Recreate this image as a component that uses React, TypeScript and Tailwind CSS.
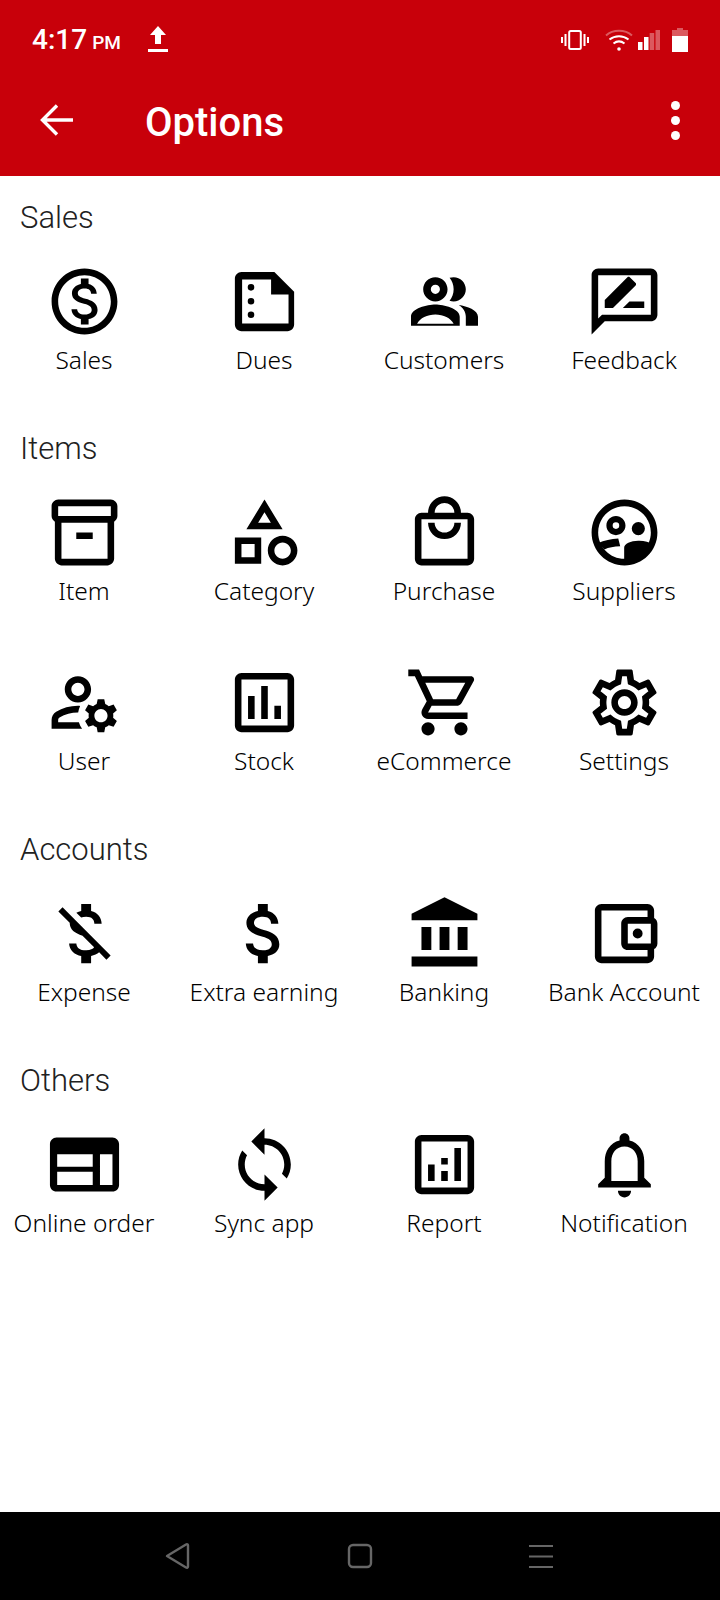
const ICONS: Record<string, string> = {
  sales:
    "M12 2C6.48 2 2 6.48 2 12s4.48 10 10 10 10-4.48 10-10S17.52 2 12 2zm0 18c-4.41 0-8-3.59-8-8s3.59-8 8-8 8 3.59 8 8-3.59 8-8 8zm.31-8.86c-1.77-.45-2.34-.94-2.34-1.67 0-.84.79-1.43 2.1-1.43 1.38 0 1.9.66 1.94 1.64h1.71c-.05-1.34-.87-2.57-2.49-2.97V5H10.9v1.69c-1.51.32-2.72 1.3-2.72 2.81 0 1.79 1.49 2.69 3.66 3.21 1.95.46 2.34 1.15 2.34 1.87 0 .53-.39 1.39-2.1 1.39-1.6 0-2.23-.72-2.32-1.64H8.04c.1 1.7 1.36 2.66 2.86 2.97V19h2.34v-1.67c1.52-.29 2.72-1.16 2.73-2.77-.01-2.2-1.9-2.96-3.66-3.42z",
  dues: "M5 3h10l6 6v10c0 1.1-.9 2-2 2H5c-1.1 0-2-.9-2-2V5c0-1.1.9-2 2-2zm.2 2.3v13.4h14.1V9.9H14V5.3H5.2zM7.9 6.7a1 1 0 1 1 0 2 1 1 0 0 1 0-2zm0 4.2a1 1 0 1 1 0 2 1 1 0 0 1 0-2zm0 4.1a1 1 0 1 1 0 2 1 1 0 0 1 0-2z",
  customers:
    "M16.67 13.13C18.04 14.06 19 15.32 19 17v3h4v-3c0-2.18-3.57-3.47-6.33-3.87zM15 12c2.21 0 4-1.79 4-4s-1.79-4-4-4c-.47 0-.91.1-1.33.24C14.5 5.27 15 6.58 15 8s-.5 2.73-1.33 3.76c.42.14.86.24 1.33.24zM9 12c2.21 0 4-1.79 4-4s-1.79-4-4-4-4 1.79-4 4 1.79 4 4 4zm0-5.5a1.5 1.5 0 1 1 0 3 1.5 1.5 0 0 1 0-3zM9 13c-2.67 0-8 1.34-8 4v3h16v-3c0-2.66-5.33-4-8-4zM3 19.3c.9-1.8 3.4-3 6-3s5.1 1.2 6 3H3z",
  feedback:
    "M20 2H4c-1.1 0-1.99.9-1.99 2L2 22l4-4h14c1.1 0 2-.9 2-2V4c0-1.1-.9-2-2-2zm0 14H5.17L4 17.17V4h16v12zM6 14h2.5l6.88-6.88c.2-.2.2-.51 0-.71L13.6 4.63c-.2-.2-.51-.2-.71 0L6 11.52V14zm5.5 0H18v-2h-4.5l-2 2z",
  item: "M20 2H4c-1 0-2 .9-2 2v3.01c0 .72.43 1.34 1 1.69V20c0 1.1 1.1 2 2 2h14c.9 0 2-.9 2-2V8.7c.57-.35 1-.97 1-1.69V4c0-1.1-1-2-2-2zm-1 18H5V9h14v11zm1-13H4V4h16v3zM9.5 12h5v2h-5z",
  category:
    "M12 2l-5.5 9h11L12 2zm0 3.84L13.93 9h-3.87L12 5.84zM17.5 13c-2.49 0-4.5 2.01-4.5 4.5s2.01 4.5 4.5 4.5 4.5-2.01 4.5-4.5-2.01-4.5-4.5-4.5zm0 7c-1.38 0-2.5-1.12-2.5-2.5s1.12-2.5 2.5-2.5 2.5 1.12 2.5 2.5-1.12 2.5-2.5 2.5zM3 21.5h8v-8H3v8zm2-6h4v4H5v-4z",
  purchase:
    "M19 6h-2c0-2.76-2.24-5-5-5S7 3.24 7 6H5c-1.1 0-2 .9-2 2v12c0 1.1.9 2 2 2h14c1.1 0 2-.9 2-2V8c0-1.1-.9-2-2-2zm-7-3c1.66 0 3 1.34 3 3H9c0-1.66 1.34-3 3-3zm7 17H5V8h14v12zm-7-8c-1.66 0-3-1.34-3-3H7c0 2.76 2.24 5 5 5s5-2.24 5-5h-2c0 1.66-1.34 3-3 3z",
  // ring, eyes, then the two shoulders as separate paths so they can overlap the ring
  suppliers:
    "M12 2C6.48 2 2 6.48 2 12s4.48 10 10 10 10-4.48 10-10S17.52 2 12 2zm0 2c4.41 0 8 3.59 8 8s-3.59 8-8 8-8-3.59-8-8 3.59-8 8-8zM9.4 7c-1.6 0-2.9 1.3-2.9 2.9s1.3 2.9 2.9 2.9 2.9-1.3 2.9-2.9S11 7 9.4 7zm0 1.9a1 1 0 1 1 0 2 1 1 0 0 1 0-2zM16.2 8.8a2 2 0 1 0 0 4 2 2 0 0 0 0-4z|M4 15.2c1.8-.8 3.9-1.3 6.1-1.4l.6 2.4c-1.9.1-3.5.3-4.8 1z|M11.9 21v-4.4c0-1.2 2.2-2.2 4.6-2.1 1.6 0 3.1.4 4.2 1.2l-2.5 3.2-4 2.1z",
  user: "M4 18v-.65c0-.34.16-.66.41-.81C6.1 15.53 8.03 15 10 15c.03 0 .05 0 .08.01.1-.7.3-1.37.59-1.98-.22-.02-.44-.03-.67-.03-2.42 0-4.68.67-6.61 1.82-.88.52-1.39 1.5-1.39 2.53V20h9.26c-.42-.6-.75-1.28-.97-2H4zM10 12c2.21 0 4-1.79 4-4s-1.79-4-4-4-4 1.79-4 4 1.79 4 4 4zm0-6c1.1 0 2 .9 2 2s-.9 2-2 2-2-.9-2-2 .9-2 2-2zM20.75 16c0-.22-.03-.42-.06-.63l1.14-1.01-1-1.73-1.45.49c-.32-.27-.68-.48-1.08-.63L18 11h-2l-.3 1.49c-.4.15-.76.36-1.08.63l-1.45-.49-1 1.73 1.14 1.01c-.03.21-.06.41-.06.63s.03.42.06.63l-1.14 1.01 1 1.73 1.45-.49c.32.27.68.48 1.08.63L16 21h2l.3-1.49c.4-.15.76-.36 1.08-.63l1.45.49 1-1.73-1.14-1.01c.03-.21.06-.41.06-.63zM17 18c-1.1 0-2-.9-2-2s.9-2 2-2 2 .9 2 2-.9 2-2 2z",
  stock:
    "M19 3H5c-1.1 0-2 .9-2 2v14c0 1.1.9 2 2 2h14c1.1 0 2-.9 2-2V5c0-1.1-.9-2-2-2zm0 16H5V5h14v14zM7 10h2v7H7zM11 7h2v10h-2zM15 13h2v4h-2z",
  ecommerce:
    "M15.55 13c.75 0 1.41-.41 1.75-1.03l3.58-6.49c.37-.66-.11-1.48-.87-1.48H5.21l-.94-2H1v2h2l3.6 7.59-1.35 2.44C4.52 15.37 5.48 17 7 17h12v-2H7l1.1-2h7.45zM6.16 6h12.15l-2.76 5H8.53L6.16 6zM7 18c-1.1 0-1.99.9-1.99 2S5.9 22 7 22s2-.9 2-2-.9-2-2-2zm10 0c-1.1 0-1.99.9-1.99 2s.89 2 1.99 2 2-.9 2-2-.9-2-2-2z",
  settings:
    "M19.43 12.98c.04-.32.07-.64.07-.98 0-.34-.03-.66-.07-.98l2.11-1.65c.19-.15.24-.42.12-.64l-2-3.46c-.09-.16-.26-.25-.44-.25-.06 0-.12.01-.17.03l-2.49 1c-.52-.4-1.08-.73-1.69-.98l-.38-2.65C14.46 2.18 14.25 2 14 2h-4c-.25 0-.46.18-.49.42l-.38 2.65c-.61.25-1.17.59-1.69.98l-2.49-1c-.06-.02-.12-.03-.18-.03-.17 0-.34.09-.43.25l-2 3.46c-.13.22-.07.49.12.64l2.11 1.65c-.04.32-.07.65-.07.98 0 .33.03.66.07.98l-2.11 1.65c-.19.15-.24.42-.12.64l2 3.46c.09.16.26.25.44.25.06 0 .12-.01.17-.03l2.49-1c.52.4 1.08.73 1.69.98l.38 2.65c.03.24.24.42.49.42h4c.25 0 .46-.18.49-.42l.38-2.65c.61-.25 1.17-.59 1.69-.98l2.49 1c.06.02.12.03.18.03.17 0 .34-.09.43-.25l2-3.46c.12-.22.07-.49-.12-.64l-2.11-1.65zm-1.98-1.71c.04.31.05.52.05.73 0 .21-.02.43-.05.73l-.14 1.13.89.7 1.08.84-.7 1.21-1.27-.51-1.04-.42-.9.68c-.43.32-.84.56-1.25.73l-1.06.43-.16 1.13-.2 1.35h-1.4l-.19-1.35-.16-1.13-1.06-.43c-.43-.18-.83-.41-1.23-.71l-.91-.7-1.06.43-1.27.51-.7-1.21 1.08-.84.89-.7-.14-1.13c-.03-.31-.05-.54-.05-.74s.02-.43.05-.73l.14-1.13-.89-.7-1.08-.84.7-1.21 1.27.51 1.04.42.9-.68c.43-.32.84-.56 1.25-.73l1.06-.43.16-1.13.2-1.35h1.39l.19 1.35.16 1.13 1.06.43c.43.18.83.41 1.23.71l.91.7 1.06-.43 1.27-.51.7 1.21-1.07.85-.89.7.14 1.13zM12 8c-2.21 0-4 1.79-4 4s1.79 4 4 4 4-1.79 4-4-1.79-4-4-4zm0 6c-1.1 0-2-.9-2-2s.9-2 2-2 2 .9 2 2-.9 2-2 2z",
  expense:
    "M12.5 6.9c1.78 0 2.44.85 2.5 2.1h2.21c-.07-1.72-1.12-3.3-3.21-3.81V3h-3v2.16c-.53.12-1.03.3-1.48.54l1.47 1.47c.41-.17.91-.27 1.51-.27zM5.33 4.06L4.06 5.33 7.5 8.77c0 2.08 1.56 3.21 3.91 3.91l3.51 3.51c-.34.48-1.05.91-2.42.91-2.06 0-2.87-.92-2.98-2.1h-2.2c.12 2.19 1.76 3.42 3.68 3.83V21h3v-2.15c.96-.18 1.82-.55 2.45-1.12l2.22 2.22 1.27-1.27L5.33 4.06z",
  earning:
    "M11.8 10.9c-2.27-.59-3-1.2-3-2.15 0-1.09 1.01-1.85 2.7-1.85 1.78 0 2.44.85 2.5 2.1h2.21c-.07-1.72-1.12-3.3-3.21-3.81V3h-3v2.16c-1.94.42-3.5 1.68-3.5 3.61 0 2.31 1.91 3.46 4.7 4.13 2.5.6 3 1.48 3 2.41 0 .69-.49 1.79-2.7 1.79-2.06 0-2.87-.92-2.98-2.1h-2.2c.12 2.19 1.76 3.42 3.68 3.83V21h3v-2.15c1.95-.37 3.5-1.5 3.5-3.55 0-2.84-2.43-3.81-4.7-4.4z",
  banking:
    "M5 10v7h3v-7H5zm5.5 0v7h3v-7h-3zM2 22h20v-3H2v3zm14-12v7h3v-7h-3zM12 1L2 6v2h20V6L12 1z",
  wallet:
    "M21 7.28V5c0-1.1-.9-2-2-2H5c-1.11 0-2 .9-2 2v14c0 1.1.89 2 2 2h14c1.1 0 2-.9 2-2v-2.28c.59-.35 1-.98 1-1.72V9c0-.74-.41-1.38-1-1.72zM20 9v6h-7V9h7zM5 19V5h14v2h-6c-1.1 0-2 .9-2 2v6c0 1.1.9 2 2 2h6v2H5zM16 10.5a1.5 1.5 0 1 1 0 3 1.5 1.5 0 0 1 0-3z",
  online:
    "M20.5 3.8h-17c-1.1 0-2 .9-2 2v12.4c0 1.1.9 2 2 2h17c1.1 0 2-.9 2-2V5.8c0-1.1-.9-2-2-2zM14.5 18.2H3.7v-4h10.8v4zm0-5.5H3.7V8.9h10.8v3.8zm6 5.5h-3.8V8.9h3.8v9.3z",
  sync: "M12 4V1L8 5l4 4V6c3.31 0 6 2.69 6 6 0 1.01-.25 1.97-.7 2.8l1.46 1.46C19.54 15.03 20 13.57 20 12c0-4.42-3.58-8-8-8zm0 14c-3.31 0-6-2.69-6-6 0-1.01.25-1.97.7-2.8L5.24 7.74C4.46 8.97 4 10.43 4 12c0 4.42 3.58 8 8 8v3l4-4-4-4v3z",
  report:
    "M19 3H5c-1.1 0-2 .9-2 2v14c0 1.1.9 2 2 2h14c1.1 0 2-.9 2-2V5c0-1.1-.9-2-2-2zm0 16H5V5h14v14zM7 12h2v5H7zM15 7h2v10h-2zM11 14h2v3h-2zM11 10h2v2h-2z",
  notification:
    "M12 22c1.1 0 2-.9 2-2h-4c0 1.1.9 2 2 2zm6-6v-5c0-3.07-1.63-5.64-4.5-6.32V4c0-.83-.67-1.5-1.5-1.5s-1.5.67-1.5 1.5v.68C7.64 5.36 6 7.92 6 11v5l-2 2v1h16v-1l-2-2zm-2 1H8v-6c0-2.48 1.51-4.5 4-4.5s4 2.02 4 4.5v6z",
};

const sections = [
  {
    title: "Sales",
    items: [
      ["sales", "Sales"],
      ["dues", "Dues"],
      ["customers", "Customers"],
      ["feedback", "Feedback"],
    ],
  },
  {
    title: "Items",
    items: [
      ["item", "Item"],
      ["category", "Category"],
      ["purchase", "Purchase"],
      ["suppliers", "Suppliers"],
      ["user", "User"],
      ["stock", "Stock"],
      ["ecommerce", "eCommerce"],
      ["settings", "Settings"],
    ],
  },
  {
    title: "Accounts",
    items: [
      ["expense", "Expense"],
      ["earning", "Extra earning"],
      ["banking", "Banking"],
      ["wallet", "Bank Account"],
    ],
  },
  {
    title: "Others",
    items: [
      ["online", "Online order"],
      ["sync", "Sync app"],
      ["report", "Report"],
      ["notification", "Notification"],
    ],
  },
];

const StatusBar = () => (
  <div className="flex h-[70px] items-center justify-between pl-8 pr-8 pt-[10px] text-white">
    <div className="flex items-center">
      <span className="font-['Roboto'] text-[28px] font-medium leading-none">4:17</span>
      <span className="ml-[5px] mt-1 font-['Roboto'] text-[19px] font-medium leading-none">PM</span>
      <svg width="22" height="28" viewBox="0 0 22 28" fill="white" className="ml-[26px] -mt-0.5">
        <path d="M11 1l8 9h-5v9H8v-9H3z" />
        <rect x="1" y="24" width="20" height="3" />
      </svg>
    </div>
    <div className="flex items-center">
      <svg width="28" height="20" viewBox="0 0 28 20" fill="none" stroke="white">
        <rect x="8.2" y="1" width="11.6" height="18" rx="1.5" strokeWidth="2" />
        <path d="M4.5 4v12M1 7v6M23.5 4v12M27 7v6" strokeWidth="2" />
      </svg>
      <svg width="28" height="22" viewBox="0 0 28 22" fill="none" stroke="white" strokeWidth="2" className="ml-4">
        <path d="M1 6.5C8 .2 20 .2 27 6.5" opacity=".35" />
        <path d="M4.5 10.5c5.5-4.5 13.5-4.5 19 0M8.5 14.5c3.5-2.7 7.5-2.7 11 0" />
        <circle cx="14" cy="20" r="1.8" fill="white" stroke="none" />
      </svg>
      <svg width="22" height="20" viewBox="0 0 22 20" fill="white" className="ml-[5px]">
        <rect x="0" y="12" width="4.5" height="8" />
        <rect x="6" y="7" width="4.5" height="13" />
        <rect x="11.7" y="3" width="4.5" height="17" opacity=".35" />
        <rect x="17.5" y="0" width="4.5" height="20" opacity=".35" />
      </svg>
      <svg width="16" height="24" viewBox="0 0 16 24" fill="white" className="ml-3">
        <path d="M5 0h6v2h5v6H0V2h5z" opacity=".35" />
        <rect x="0" y="8" width="16" height="16" />
      </svg>
    </div>
  </div>
);

const App = () => {
  return (
    <div className="flex h-[1600px] w-[720px] flex-col overflow-hidden bg-white">
      <header className="h-[176px] bg-[#c8000a]">
        <StatusBar />
        <div className="flex h-[106px] items-center pb-1.5 pl-10 pr-10 text-white">
          <svg width="34" height="32" viewBox="0 0 34 32" fill="none" stroke="white" strokeWidth="3.4">
            <path d="M33 16H3M17 1.5L2.5 16 17 30.5" />
          </svg>
          <h1 className="ml-[71px] mt-[5px] flex-1 font-['Roboto'] text-[40px] font-medium leading-none">Options</h1>
          <div className="flex flex-col gap-[6px]">
            <span className="h-[9px] w-[9px] rounded-full bg-white" />
            <span className="h-[9px] w-[9px] rounded-full bg-white" />
            <span className="h-[9px] w-[9px] rounded-full bg-white" />
          </div>
        </div>
      </header>

      <main className="flex-1 pt-[11px]">
        {sections.map((section) => (
          <section key={section.title}>
            <h2 className="flex h-[61px] items-center pl-5 font-['Roboto'] text-[31px] font-light leading-none text-[#212121]">
              {section.title}
            </h2>
            <div className="-ml-1.5 grid w-[720px] grid-cols-4">
              {section.items.map(([icon, label]) => (
                <div key={label} className="flex h-[170px] flex-col items-center pt-[14px]">
                  <svg width="79" height="79" viewBox="0 0 24 24" fill="black" fillRule="evenodd">
                    {ICONS[icon].split("|").map((d) =>
                      icon === "customers" ? (
                        <path key={d} d={d} transform="translate(0.9 0.9) scale(0.925)" />
                      ) : (
                        <path key={d} d={d} />
                      ),
                    )}
                  </svg>
                  <span className="whitespace-nowrap font-['Noto_Sans'] text-[24.5px] font-light leading-[38px] text-black">
                    {label}
                  </span>
                </div>
              ))}
            </div>
          </section>
        ))}
      </main>

      <nav className="flex h-[88px] items-center justify-center bg-black pr-[3px]">
        <svg width="26" height="30" viewBox="0 0 26 30" fill="none" stroke="#666" strokeWidth="2.4" strokeLinejoin="round">
          <path d="M3 15L22 3.5c1-.5 2 0 2 1v21c0 1-1 1.5-2 1z" />
        </svg>
        <svg width="26" height="26" viewBox="0 0 26 26" fill="none" stroke="#666" strokeWidth="2.4" className="ml-[157px]">
          <rect x="2" y="2" width="22" height="22" rx="4" />
        </svg>
        <svg width="24" height="24" viewBox="0 0 24 24" stroke="#666" strokeWidth="2" className="ml-[156px]">
          <path d="M0 2h24M0 12.5h24M0 23h24" />
        </svg>
      </nav>
    </div>
  );
};

export default App;
